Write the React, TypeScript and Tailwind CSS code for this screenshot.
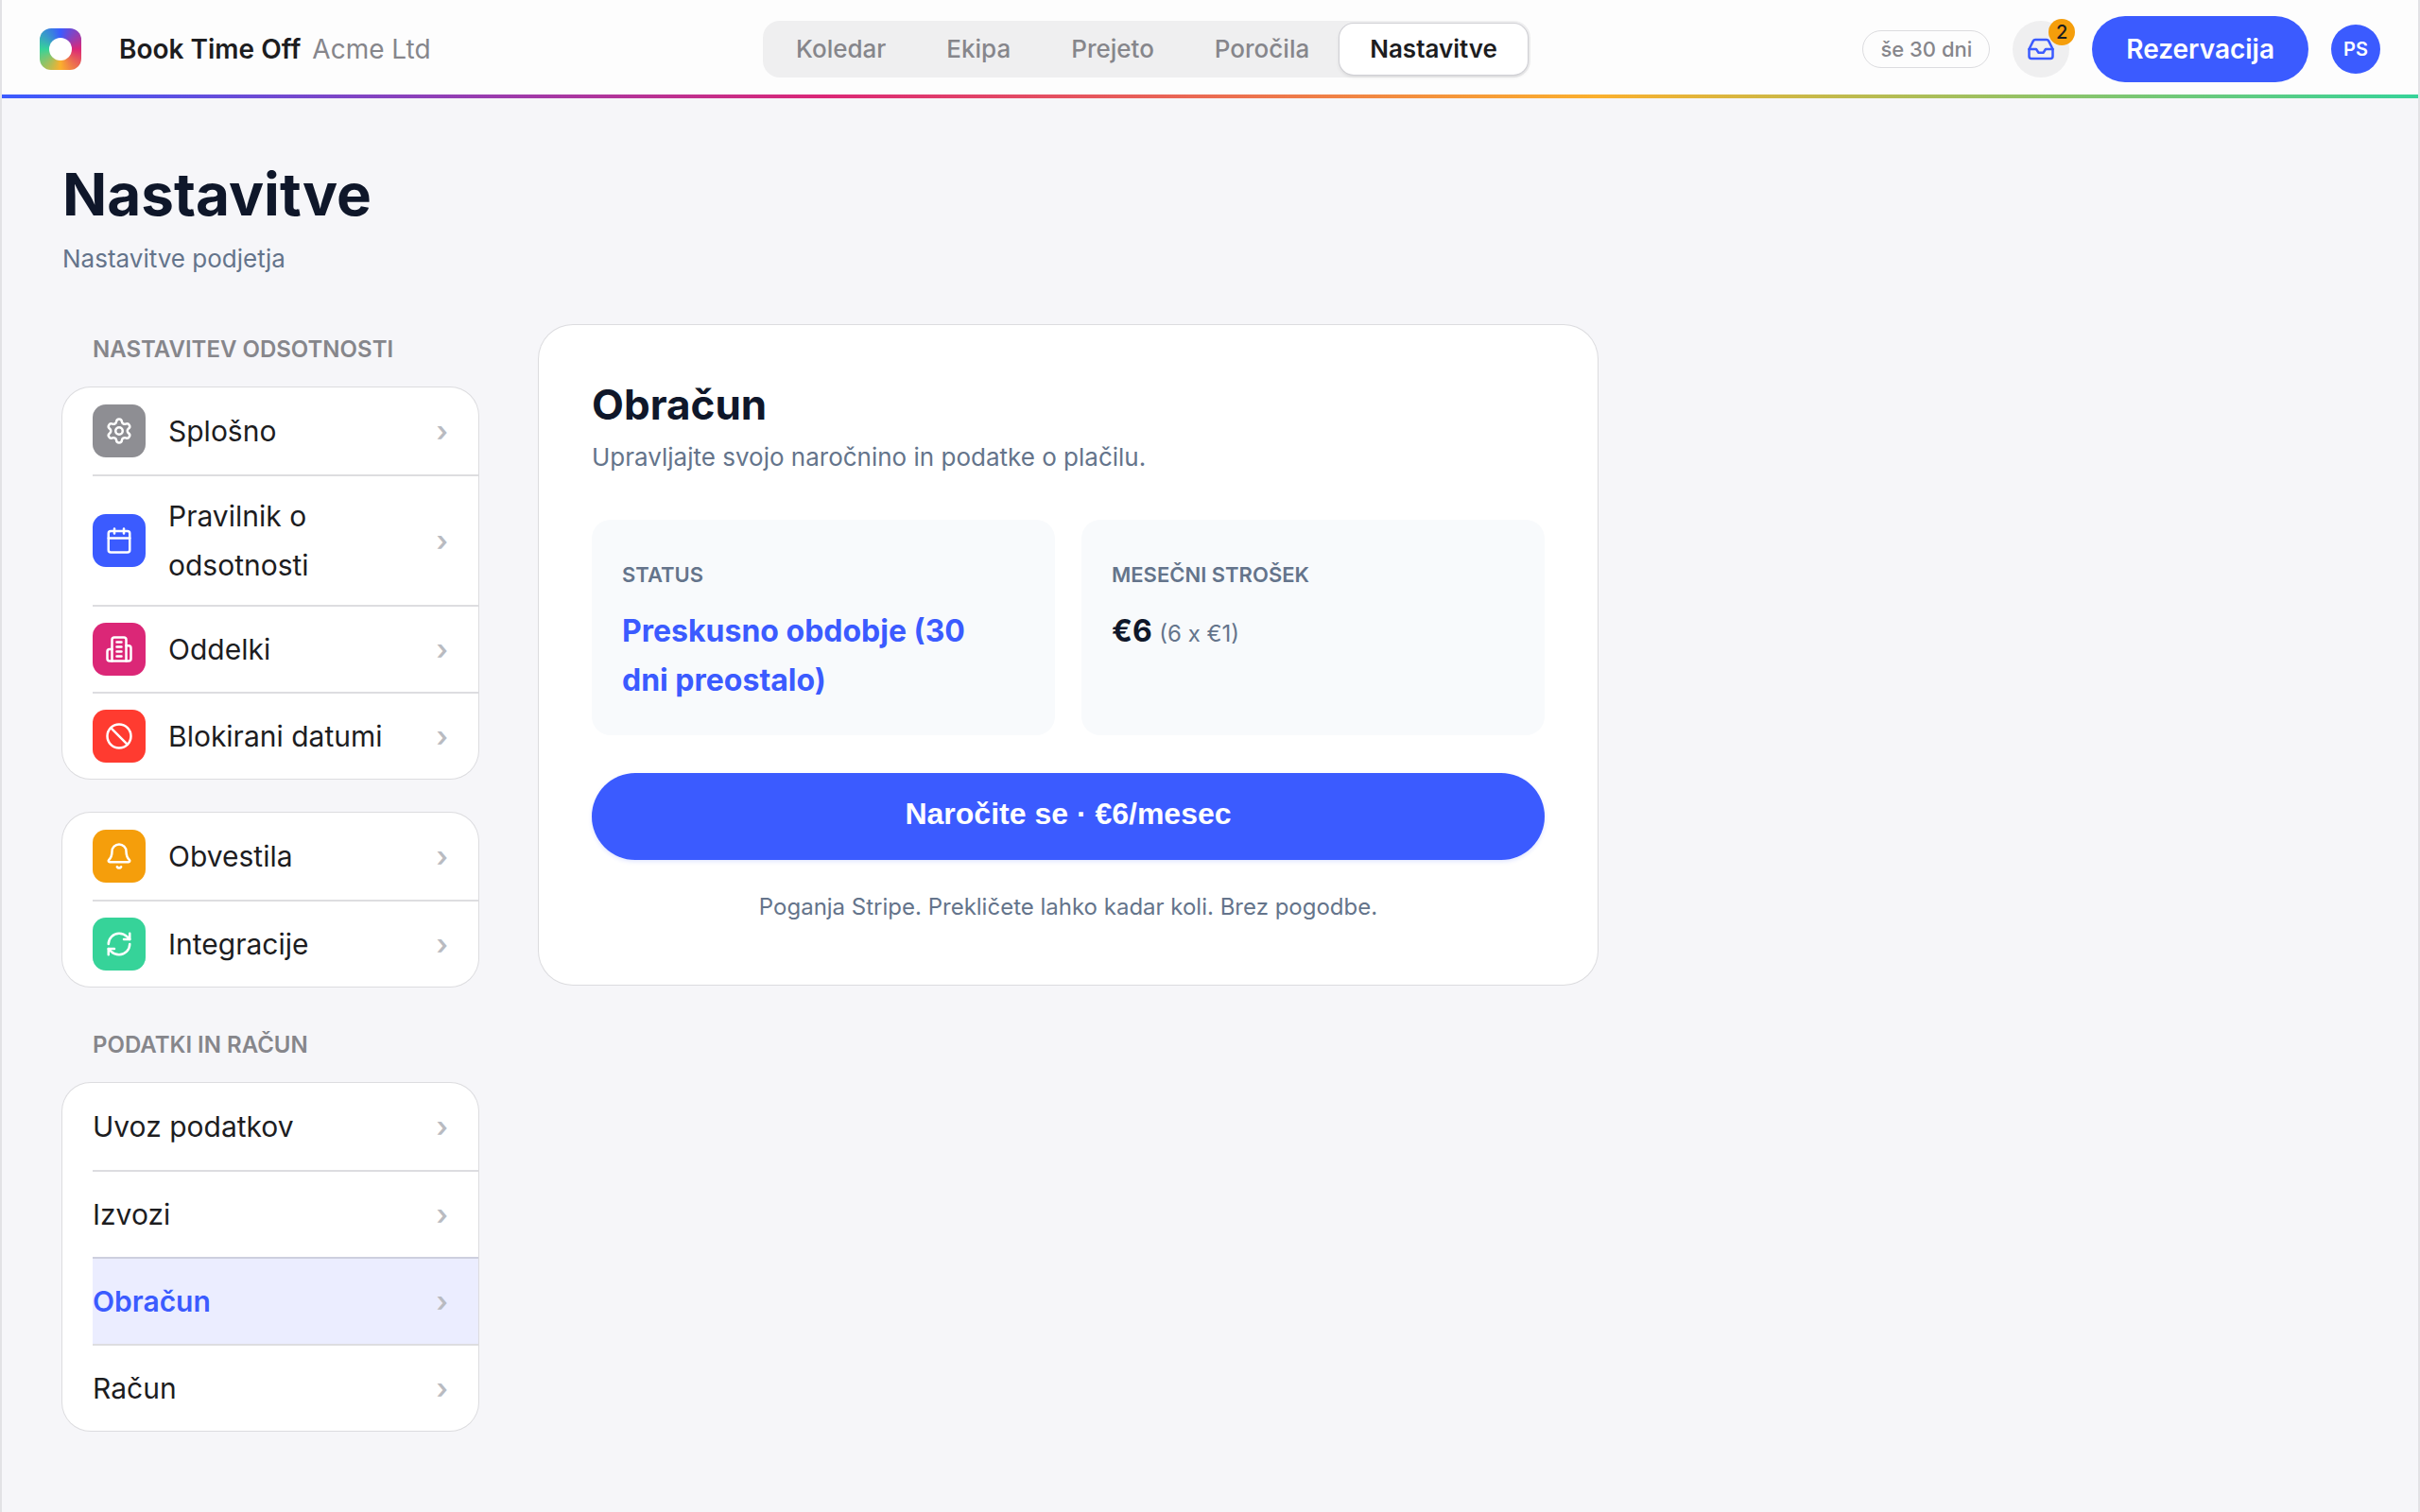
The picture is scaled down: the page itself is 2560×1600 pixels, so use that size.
import type { ReactNode } from 'react'
import { Ban, Bell, Calendar, Inbox, RefreshCw, Settings } from 'lucide-react'
import clsx from 'clsx'

interface MenuItem {
  label: string
  icon?: ReactNode
  tile?: string
  active?: boolean
}

interface MenuGroup {
  title?: string
  items: MenuItem[]
}

const tabs = ['Koledar', 'Ekipa', 'Prejeto', 'Poročila', 'Nastavitve']

function BuildingIcon() {
  return (
    <svg
      width="30"
      height="30"
      viewBox="0 0 24 24"
      fill="none"
      stroke="currentColor"
      strokeWidth="2"
      strokeLinecap="round"
      strokeLinejoin="round"
    >
      <path d="M6 22V4a2 2 0 0 1 2-2h8a2 2 0 0 1 2 2v18Z" />
      <path d="M6 12H4a2 2 0 0 0-2 2v6a2 2 0 0 0 2 2h2" />
      <path d="M18 9h2a2 2 0 0 1 2 2v9a2 2 0 0 1-2 2h-2" />
      <path d="M10 6h4M10 10h4M10 14h4M10 18h4" />
    </svg>
  )
}

const groups: MenuGroup[] = [
  {
    title: 'Nastavitev odsotnosti',
    items: [
      { label: 'Splošno', icon: <Settings size={30} />, tile: 'bg-[#8e8e93]' },
      { label: 'Pravilnik o odsotnosti', icon: <Calendar size={30} />, tile: 'bg-[#3b5bff]' },
      { label: 'Oddelki', icon: <BuildingIcon />, tile: 'bg-[#db2777]' },
      { label: 'Blokirani datumi', icon: <Ban size={30} />, tile: 'bg-[#ff3b30]' },
    ],
  },
  {
    items: [
      { label: 'Obvestila', icon: <Bell size={30} />, tile: 'bg-[#f59e0b]' },
      { label: 'Integracije', icon: <RefreshCw size={30} />, tile: 'bg-[#36d399]' },
    ],
  },
  {
    title: 'Podatki in račun',
    items: [
      { label: 'Uvoz podatkov' },
      { label: 'Izvozi' },
      { label: 'Obračun', active: true },
      { label: 'Račun' },
    ],
  },
]

function Logo() {
  return (
    <span className="flex size-11 items-center justify-center rounded-xl bg-[conic-gradient(#3b5bff,#db2777,#fbb02d,#36d399,#3b5bff)]">
      <span className="size-6 rounded-full bg-white" />
    </span>
  )
}

function Header() {
  return (
    <header>
      <div className="flex h-[100px] items-center justify-between bg-[#fdfdfd] px-10 pt-1">
        <a href="#" className="flex items-center gap-10">
          <Logo />
          <span className="flex items-center gap-3 text-[28px]">
            <span className="font-semibold text-[#1d1d1f]">Book Time Off</span>
            <span className="text-[#86868b]">Acme Ltd</span>
          </span>
        </a>

        <nav className="flex h-[60px] items-center rounded-[18px] bg-[#efeff0] p-[3px] text-[26px]">
          {tabs.map((tab) => (
            <a
              key={tab}
              href="#"
              className={clsx(
                'flex h-full items-center rounded-[15px] px-8',
                tab === 'Nastavitve'
                  ? 'bg-white font-semibold text-[#1d1d1f] shadow-[0_0_0_1px_#cfcfd4,0_2px_4px_rgba(0,0,0,0.12)]'
                  : 'font-medium text-[#86868b]',
              )}
            >
              {tab}
            </a>
          ))}
        </nav>

        <div className="flex items-center gap-6">
          <span className="flex h-10 items-center rounded-full border border-[#dcdcdf] px-[18px] text-[22px] font-medium text-[#86868b]">
            še 30 dni
          </span>
          <button
            type="button"
            aria-label="Prejeto"
            className="relative flex size-[60px] items-center justify-center rounded-full bg-[#efeff0] text-[#3b5bff]"
          >
            <Inbox size={30} />
            <span className="absolute -top-0.5 -right-1.5 flex size-7 items-center justify-center rounded-full bg-[#f59e0b] text-[20px] font-medium text-[#1d1d1f]">
              2
            </span>
          </button>
          <button
            type="button"
            className="h-[70px] rounded-full bg-[#3b5bff] px-9 text-[28px] font-semibold text-white"
          >
            Rezervacija
          </button>
          <button
            type="button"
            className="size-[52px] rounded-full bg-[#3b5bff] text-[20px] font-semibold text-white"
          >
            PS
          </button>
        </div>
      </div>
      <div className="h-1 bg-[linear-gradient(90deg,#3b5bff,#db2777_34%,#fbb02d_66%,#36d399)]" />
    </header>
  )
}

function MenuRow({ item, isFirst, isLast, beforeActive }: {
  item: MenuItem
  isFirst: boolean
  isLast: boolean
  beforeActive: boolean
}) {
  return (
    <a
      href="#"
      className={clsx(
        'ml-8 flex items-center gap-6 py-4 pr-8 text-[30px]',
        isFirst && 'min-h-[94px]',
        isLast && 'min-h-[90px]',
        !isFirst && !isLast && 'min-h-[92px]',
        !isLast && 'border-b-2',
        beforeActive ? 'border-[#cdcfde]' : 'border-[#dddde0]',
        item.active ? 'bg-[#ebedff] font-semibold text-[#3b5bff]' : 'text-[#1d1d1f]',
      )}
    >
      {item.icon && (
        <span
          className={clsx('flex size-14 shrink-0 items-center justify-center rounded-[14px] text-white', item.tile)}
        >
          {item.icon}
        </span>
      )}
      <span className="flex-1">{item.label}</span>
      <span className="font-semibold text-[#b9bbc1]">›</span>
    </a>
  )
}

function Sidebar() {
  return (
    <aside className="flex w-[440px] shrink-0 flex-col gap-9">
      {groups.map((group) => (
        <section key={group.items[0].label}>
          {group.title && (
            <h2 className="mb-3.5 px-8 text-[24px] font-semibold text-[#86868b] uppercase">{group.title}</h2>
          )}
          <div className="overflow-hidden rounded-[30px] bg-white shadow-[0_0_0_1px_#dcdcdf]">
            {group.items.map((item, i) => (
              <MenuRow
                key={item.label}
                item={item}
                isFirst={i === 0}
                isLast={i === group.items.length - 1}
                beforeActive={Boolean(group.items[i + 1]?.active)}
              />
            ))}
          </div>
        </section>
      ))}
    </aside>
  )
}

function BillingCard() {
  return (
    <section className="w-full max-w-[1120px] rounded-[36px] bg-white p-14 shadow-[0_0_0_1px_#dcdcdf]">
      <h2 className="text-[44px] leading-[56px] font-bold text-[#0f172a]">Obračun</h2>
      <p className="mt-0.5 text-[26px] text-[#64748b]">Upravljajte svojo naročnino in podatke o plačilu.</p>

      <div className="mt-10 grid grid-cols-2 gap-7">
        <div className="rounded-[20px] bg-[#f8fafc] py-8 pr-12 pl-8">
          <div className="text-[22px] font-semibold text-[#64748b] uppercase">Status</div>
          <div className="mt-2 text-[32px] font-bold text-[#3b5bff]">Preskusno obdobje (30 dni preostalo)</div>
        </div>
        <div className="rounded-[20px] bg-[#f8fafc] py-8 pr-12 pl-8">
          <div className="text-[22px] font-semibold text-[#64748b] uppercase">Mesečni strošek</div>
          <div className="mt-2 text-[32px] font-bold text-[#0f172a]">
            €6 <span className="text-[24px] font-normal text-[#64748b]">(6 x €1)</span>
          </div>
        </div>
      </div>

      <button
        type="button"
        className="mt-10 flex h-[92px] w-full items-center justify-center rounded-full bg-[#3b5bff] pb-1.5 font-['Liberation_Sans',sans-serif] text-[32px] font-bold text-white shadow-[0_2px_4px_rgba(59,91,255,0.15)]"
      >
        Naročite se · €6/mesec
      </button>
      <p className="mt-6 text-center text-[24px] text-[#64748b]">
        Poganja Stripe. Prekličete lahko kadar koli. Brez pogodbe.
      </p>
    </section>
  )
}

export default function App() {
  return (
    <div className="min-h-screen border-x-2 border-[#e2e2e5] bg-[#f6f6f9] font-['Inter',sans-serif] leading-[52px]">
      <Header />
      <main className="p-16">
        <h1 className="text-[62px] leading-[76px] font-bold text-[#0f172a]">Nastavitve</h1>
        <p className="mt-1 text-[26px] text-[#64748b]">Nastavitve podjetja</p>
        <div className="mt-11 flex items-start gap-16">
          <Sidebar />
          <BillingCard />
        </div>
      </main>
    </div>
  )
}
